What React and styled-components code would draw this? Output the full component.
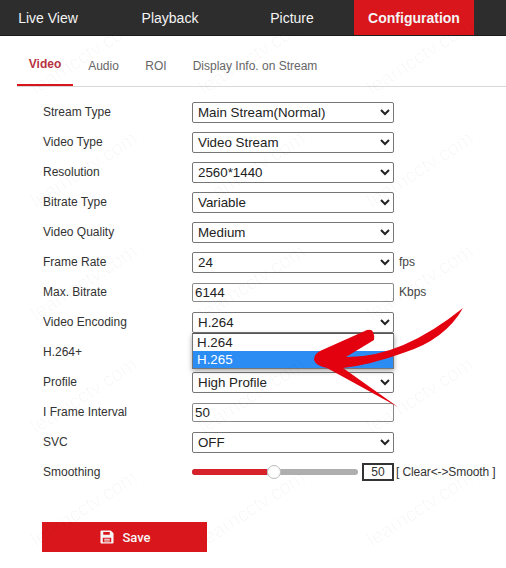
import React from "react";
import styled, { createGlobalStyle } from "styled-components";

const GlobalStyle = createGlobalStyle`
    html, body {
        margin: 0;
        padding: 0;
        background: #fff;
    }
    body {
        font-family: "Liberation Sans", Arial, sans-serif;
        color: #333;
    }
`;

const Page = styled.div`
    position: relative;
    width: 506px;
    height: 568px;
    overflow: hidden;
    background: #fff;
`;

const TopNav = styled.nav`
    display: flex;
    gap: 2px;
    height: 35px;
    background: #2d2d2d;
    border-bottom: 1px solid #1c1c1c;
`;

const NavItem = styled.div`
    box-sizing: border-box;
    width: ${({ $w }) => $w}px;
    padding-right: ${({ $pr }) => $pr || 0}px;
    display: flex;
    align-items: center;
    justify-content: center;
    font-size: 14px;
    font-weight: ${({ $active }) => ($active ? 700 : 400)};
    color: #f4f4f4;
    background: ${({ $active }) => ($active ? "#d9161c" : "transparent")};
`;

const Tabs = styled.div`
    display: flex;
    height: 50px;
    margin-left: 17px;
    border-bottom: 1px solid #d8d8d8;
`;

const Tab = styled.div`
    box-sizing: border-box;
    display: flex;
    align-items: center;
    justify-content: center;
    width: ${({ $w }) => $w}px;
    height: 50px;
    padding-top: ${({ $active }) => ($active ? 8 : 12)}px;
    font-size: 12px;
    font-weight: ${({ $active }) => ($active ? 700 : 400)};
    color: ${({ $active }) => ($active ? "#b8323f" : "#666")};
    border-bottom: 2px solid ${({ $active }) => ($active ? "#d9161c" : "transparent")};
`;

const Form = styled.div`
    padding: 10px 0 0 43px;
`;

const Row = styled.div`
    display: flex;
    align-items: center;
    height: 30px;
`;

const Label = styled.div`
    width: 149px;
    font-size: 12px;
    color: #333;
`;

const Field = styled.div`
    position: relative;
    display: flex;
    align-items: center;
`;

const Select = styled.select`
    box-sizing: border-box;
    width: 202px;
    height: 21px;
    padding: 0 0 0 1px;
    font-family: "Liberation Sans", Arial, sans-serif;
    font-size: 13.33px;
    color: #222;
    background: #fff;
    border: 1px solid #767676;
    border-radius: 2px;
`;

const TextInput = styled.input`
    box-sizing: border-box;
    width: 202px;
    height: 19px;
    padding: 0 2px;
    font-family: "Liberation Sans", Arial, sans-serif;
    font-size: 13.33px;
    color: #222;
    background: #fff;
    border: 1px solid #8a8a8a;
    border-radius: 2px;
`;

const Unit = styled.span`
    margin-left: 5px;
    font-size: 12px;
    color: #444;
`;

const Dropdown = styled.div`
    position: absolute;
    top: 21px;
    left: 0;
    z-index: 2;
    box-sizing: border-box;
    width: 202px;
    height: 36px;
    background: #fff;
    border: 1px solid #767676;
    border-top-color: #555;
    box-shadow: 0 2px 5px rgba(0, 0, 0, 0.35);
    font-size: 13.33px;
`;

const Option = styled.div`
    height: 17px;
    line-height: 17px;
    padding-left: 4px;
    color: ${({ $selected }) => ($selected ? "#fff" : "#222")};
    background: ${({ $selected }) => ($selected ? "#2b8cf3" : "#fff")};
`;

const Slider = styled.div`
    position: relative;
    width: 166px;
    height: 6px;
    background: #aeaeae;
    border-radius: 3px;
`;

const SliderFill = styled.div`
    height: 100%;
    background: #d7212b;
    border-radius: 3px 0 0 3px;
`;

const SliderThumb = styled.div`
    position: absolute;
    top: -4px;
    box-sizing: border-box;
    width: 14px;
    height: 14px;
    margin-left: -7px;
    background: #fff;
    border: 1px solid #bbb;
    border-radius: 50%;
`;

const NumberBox = styled.div`
    box-sizing: border-box;
    width: 32px;
    height: 18px;
    margin-left: 4px;
    border: 2px solid #333;
    font-size: 12px;
    line-height: 14px;
    text-align: center;
    color: #333;
`;

const Hint = styled.span`
    margin-left: 2px;
    font-size: 12px;
    letter-spacing: -0.1px;
    color: #333;
    white-space: nowrap;
`;

const SaveButton = styled.button`
    display: flex;
    align-items: center;
    justify-content: center;
    gap: 8px;
    width: 165px;
    height: 30px;
    margin: 35px 0 0 42px;
    padding: 0 0 0 2px;
    border: 0;
    background: #d9161c;
    color: #f6f6f6;
    font-family: Roboto, "Liberation Sans", sans-serif;
    font-size: 13px;
    font-weight: 500;
`;

const Arrow = styled.svg`
    position: absolute;
    top: 0;
    left: 0;
    z-index: 3;
    pointer-events: none;
`;

const WatermarkLayer = styled.div`
    position: absolute;
    inset: 0;
    z-index: 4;
    display: grid;
    grid-template-columns: repeat(3, 168px);
    grid-auto-rows: 113px;
    pointer-events: none;
`;

const Watermark = styled.span`
    align-self: center;
    justify-self: center;
    font-size: 20px;
    color: rgba(0, 0, 0, 0.03);
    transform: rotate(-33deg);
    white-space: nowrap;
`;

const SaveIcon = () => (
    <svg width="14" height="14" viewBox="0 0 15 15">
        <path
            fillRule="evenodd"
            fill="#f6f6f6"
            d="M1.5 0.5h10l3 3v10a1 1 0 0 1-1 1h-12a1 1 0 0 1-1-1v-12a1 1 0 0 1 1-1zM3.5 2.2v3h7v-3zM3 8.2v4.8h9V8.2zM4.5 9.4h6v1h-6zM4.5 11.2h6v1h-6z"
        />
    </svg>
);

const rows = [
    { label: "Stream Type", value: "Main Stream(Normal)" },
    { label: "Video Type", value: "Video Stream" },
    { label: "Resolution", value: "2560*1440" },
    { label: "Bitrate Type", value: "Variable" },
    { label: "Video Quality", value: "Medium" },
    { label: "Frame Rate", value: "24", unit: "fps" },
    { label: "Max. Bitrate", value: "6144", unit: "Kbps", input: true },
    { label: "Video Encoding", value: "H.264", open: true },
    { label: "H.264+", value: "OFF" },
    { label: "Profile", value: "High Profile" },
    { label: "I Frame Interval", value: "50", input: true },
    { label: "SVC", value: "OFF" },
];

const App = () => {
    return (
        <Page>
            <GlobalStyle />
            <TopNav>
                <NavItem $w={108} $pr={12}>Live View</NavItem>
                <NavItem $w={120}>Playback</NavItem>
                <NavItem $w={120}>Picture</NavItem>
                <NavItem $w={120} $active>Configuration</NavItem>
            </TopNav>
            <Tabs>
                <Tab $active $w={56}>Video</Tab>
                <Tab $w={61}>Audio</Tab>
                <Tab $w={44}>ROI</Tab>
                <Tab $w={154}>Display Info. on Stream</Tab>
            </Tabs>
            <Form>
                {rows.map((row) => (
                    <Row key={row.label}>
                        <Label>{row.label}</Label>
                        <Field>
                            {row.input ? (
                                <TextInput defaultValue={row.value} />
                            ) : (
                                <Select defaultValue={row.value}>
                                    <option>{row.value}</option>
                                </Select>
                            )}
                            {row.open && (
                                <Dropdown>
                                    <Option>H.264</Option>
                                    <Option $selected>H.265</Option>
                                </Dropdown>
                            )}
                        </Field>
                        {row.unit && <Unit>{row.unit}</Unit>}
                    </Row>
                ))}
                <Row>
                    <Label>Smoothing</Label>
                    <Slider>
                        <SliderFill style={{ width: `${(50 / 110) * 100}%` }} />
                        <SliderThumb style={{ left: "82px" }} />
                    </Slider>
                    <NumberBox>50</NumberBox>
                    <Hint>[ Clear&lt;-&gt;Smooth ]</Hint>
                </Row>
            </Form>
            <SaveButton>
                <SaveIcon />
                Save
            </SaveButton>
            <Arrow width="506" height="568" viewBox="0 0 506 568">
                <path
                    fill="#e3000f"
                    d="M314 360 Q314 354 320 351 L367 330 Q372 329 373 332 Q375 336 374 340 L346 357 Q401 358 463 308 Q445 340 403 353 Q370 365 343 368 L398 407 L327 368 Q316 366 314 360 Z"
                />
            </Arrow>
            <WatermarkLayer>
                {Array.from({ length: 15 }, (_, i) => (
                    <Watermark key={i}>learncctv.com</Watermark>
                ))}
            </WatermarkLayer>
        </Page>
    );
};

export default App;
